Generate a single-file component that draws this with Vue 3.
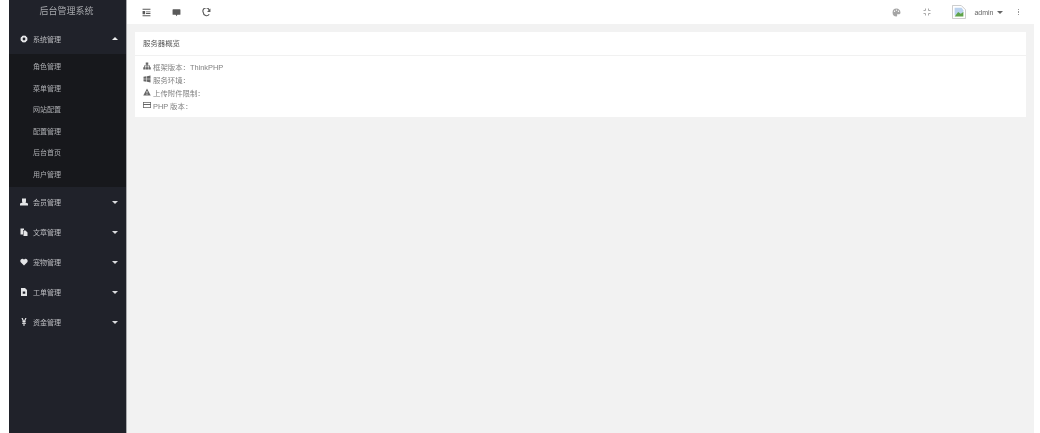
<script setup>
const children = ['角色管理', '菜单管理', '网站配置', '配置管理', '后台首页', '用户管理']
const groups = [
  { name: '会员管理', icon: 'users' },
  { name: '文章管理', icon: 'copy' },
  { name: '宠物管理', icon: 'heart' },
  { name: '工单管理', icon: 'file' },
  { name: '资金管理', icon: 'yen' },
]
</script>

<template>
  <div class="page">
    <aside class="side">
      <div class="brand">后台管理系统</div>
      <div class="group open">
        <svg class="ico" viewBox="0 0 16 16"><path fill-rule="evenodd" d="M8 0l1.400 2 2.300-.6.700 2.200 2.200.7-.6 2.300L16 8l-2 1.400.6 2.300-2.200.7-.7 2.200-2.300-.6L8 16l-1.400-2-2.300.6-.7-2.200-2.200-.7.6-2.300L0 8l2-1.400-.6-2.300 2.200-.7.7-2.200 2.300.6zM8 5.200a2.800 2.800 0 100 5.600 2.800 2.800 0 000-5.600z"/></svg>
        <span class="gname">系统管理</span>
        <i class="caret up"></i>
      </div>
      <ul class="sub">
        <li v-for="c in children" :key="c">{{ c }}</li>
      </ul>
      <div v-for="g in groups" :key="g.name" class="group">
        <svg class="ico" :class="g.icon" viewBox="0 0 16 16">
          <path v-if="g.icon === 'users'" d="M4 1h8v6l-1 2 5 2v4H0v-4l5-2-1-2z"/>
          <path v-else-if="g.icon === 'copy'" d="M1 1h7v3H6v9H1zM7 5h4l4 4v7H7z"/>
          <path v-else-if="g.icon === 'heart'" d="M8 15L1.500 8.500C-.5 5.500 1.500 1.500 4.800 1.500 6.300 1.500 7.400 2.300 8 3.500c.6-1.200 1.700-2 3.200-2 3.300 0 5.300 4 3.300 7z"/>
          <path v-else-if="g.icon === 'file'" fill-rule="evenodd" d="M2 0h8l4 4v12H2zM5.500 7v4.500h5V7z"/>
          <path v-else d="M3 0h2.500L8 6l2.500-6H13l-2.800 7H12v1.500H9V10h3v1.500H9V16H7v-4.500H4V10h3V8.500H4V7h1.800z"/>
        </svg>
        <span class="gname">{{ g.name }}</span>
        <i class="caret"></i>
      </div>
    </aside>
    <div class="main">
      <header class="top">
        <div class="tools">
          <svg class="tool" viewBox="0 0 16 16"><path d="M1 1.500h14V3H1zM7 6h8v1.500H7zM7 9h8v1.500H7zM1 13h14v1.500H1zM1 5.500h4.500v5.500H1z"/></svg>
          <svg class="tool" viewBox="0 0 16 16"><path d="M2 2h12a1 1 0 011 1v8a1 1 0 01-1 1H9.500L8 14.500 6.500 12H2a1 1 0 01-1-1V3a1 1 0 011-1z"/></svg>
          <svg class="tool" viewBox="0 0 16 16"><path fill="none" stroke="currentColor" stroke-width="2" d="M13 5.500A5.700 5.700 0 102.300 8a5.700 5.700 0 0010.500 3"/><path d="M15 1v6H9z"/></svg>
        </div>
        <div class="right">
          <svg class="palette" viewBox="0 0 16 16"><path fill-rule="evenodd" d="M8 1a7 7 0 100 14c1.500 0 1.500-1.300 1-2-.5-1 0-2 1.500-2H13c1.200 0 2-1 2-3 0-4-3-7-7-7zM4.500 7a1.200 1.200 0 110-2.400 1.200 1.200 0 010 2.400zM8 5a1.200 1.200 0 110-2.400A1.200 1.200 0 018 5zm3.500 2a1.200 1.200 0 110-2.400 1.200 1.200 0 010 2.400z"/></svg>
          <svg class="full" viewBox="0 0 16 16"><path fill="none" stroke="currentColor" stroke-width="1.800" d="M1 5l4 0 0-4M11 1l0 4 4 0M15 11l-4 0 0 4M5 15l0-4-4 0"/></svg>
          <svg class="avatar" viewBox="0 0 16 16"><path d="M.5.5h10l5 5v10H.5z" fill="#fff" stroke="#c4c4c4"/><path d="M3 3h8l2 3v3L3 12z" fill="#bcd3ee"/><path d="M3 13l4-5 3 2 3-2v5z" fill="#5fa34a"/></svg>
          <span class="user">admin</span>
          <i class="caret dark"></i>
          <span class="more"><i></i><i></i><i></i></span>
        </div>
      </header>
      <section class="content">
        <div class="card">
          <div class="card-head">服务器概览</div>
          <div class="card-body">
            <div class="row"><svg viewBox="0 0 16 16"><path d="M5.500 1h5v4.500H9V7h5v3.500h1.500V15h-4.500v-4.500H12.500V8.500H8.800v2h1.500V15H5.700v-4.500h1.500v-2H3.500v2H5V15H.5v-4.500H2V7h5.200V5.500H5.500z"/></svg>框架版本：ThinkPHP</div>
            <div class="row"><svg viewBox="0 0 16 16"><path d="M1 3.500l6-1v5H1zM8 2.300l7-1.200v6.400H8zM1 8.500h6v5l-6-1zM8 8.500h7v6.400l-7-1.200z"/></svg>服务环境：</div>
            <div class="row"><svg viewBox="0 0 16 16"><path fill-rule="evenodd" d="M8 1l7.500 14H.5zM7.200 6v5h1.600V6zm0 6v1.500h1.600V12z"/></svg>上传附件限制：</div>
            <div class="row"><svg viewBox="0 0 16 16"><path fill-rule="evenodd" d="M0 2h16v12H0zM1.500 3.500V6h13V3.500zm0 4.500v4.500h13V8z"/></svg>PHP 版本：</div>
          </div>
        </div>
      </section>
    </div>
  </div>
</template>

<style scoped>
.page {
  display: flex;
  width: 1040px;
  height: 433px;
  padding: 0 6px 0 9px;
  box-sizing: border-box;
  overflow: hidden;
  background: #fff;
  font-family: "Liberation Sans", "Noto Sans CJK SC", sans-serif;
  filter: blur(.7px);
}
.side {
  width: 118px;
  flex: none;
  background: #20222a;
  border-right: 1px solid #a9aaad;
  box-sizing: border-box;
  color: #c2c3c6;
}
.brand {
  height: 23px;
  line-height: 22px;
  text-align: center;
  font-size: 9px;
  color: #a6a8ac;
  padding-right: 2px;
}
.group {
  display: flex;
  align-items: center;
  height: 30px;
  padding: 0 8px 0 11px;
  font-size: 7px;
}
.group.open {
  height: 31px;
}
.ico {
  width: 8px;
  height: 8px;
  fill: #e4e5e7;
  flex: none;
  margin-right: 5px;
}
.gname { flex: 1; color: #bcbdc1; }
.caret {
  width: 0;
  height: 0;
  margin-top: 2px;
  border-left: 3px solid transparent;
  border-right: 3px solid transparent;
  border-top: 3px solid #dcdde0;
}
.caret.up { border-top: 0; border-bottom: 3px solid #eceded; margin-top: 0; }
.caret.dark { border-top-color: #666; margin-left: 3px; margin-top: 0; }
.sub {
  list-style: none;
  margin: 0;
  padding: 2px 0 1.400px;
  background: #17181c;
}
.sub li {
  height: 21.600px;
  line-height: 21.600px;
  padding-left: 24px;
  font-size: 7px;
  color: #adaeb2;
}
.main {
  flex: 1;
  display: flex;
  flex-direction: column;
  min-width: 0;
  background: #f2f2f2;
}
.top {
  height: 24px;
  flex: none;
  display: flex;
  align-items: center;
  justify-content: space-between;
  background: #fff;
  margin-right: -6px;
  padding: 0 21px 0 15px;
  color: #5a5a5a;
}
.tools { display: flex; gap: 21px; align-items: center; }
.tool { width: 9px; height: 9px; fill: currentColor; }
.right { display: flex; align-items: center; color: #888; }
.palette { width: 9px; height: 9px; fill: #a5a5a5; }
.full { width: 8px; height: 8px; color: #a0a0a0; margin-left: 22px; }
.avatar { width: 14px; height: 14px; margin-left: 21px; }
.user { font-size: 7px; margin-left: 8px; color: #666; }
.more { display: flex; flex-direction: column; gap: 1px; margin-left: 15px; }
.more i { width: 1.500px; height: 1.500px; background: #999; }
.content { padding: 8px 8px 0; }
.card { background: #fff; height: 85px; }
.card-head {
  height: 23px;
  line-height: 23px;
  padding-left: 8px;
  font-size: 7.400px;
  color: #555;
  border-bottom: 1px solid #f1f1f1;
}
.card-body { padding: 3.500px 8px; }
.row {
  display: flex;
  align-items: center;
  height: 13px;
  font-size: 7.400px;
  color: #808080;
}
.row svg { width: 8px; height: 8px; fill: #666; margin-right: 2px; flex: none; }
</style>
